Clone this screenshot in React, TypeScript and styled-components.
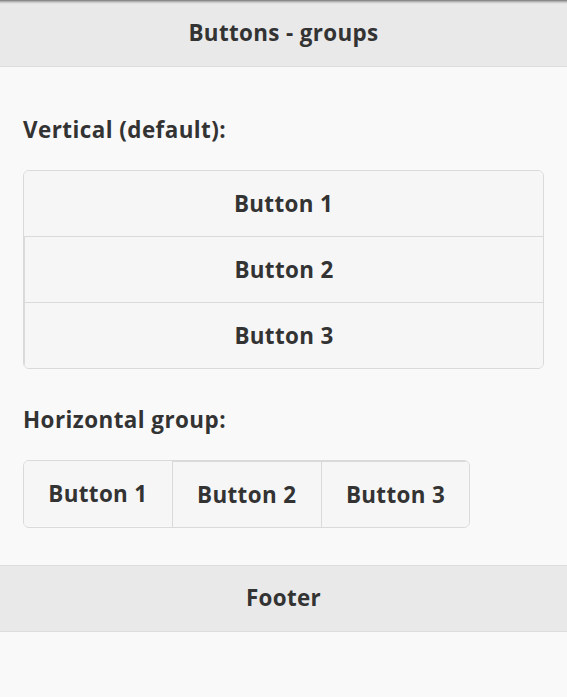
import styled, { createGlobalStyle } from 'styled-components';

const GlobalStyle = createGlobalStyle`
  html, body {
    margin: 0;
    padding: 0;
    background: #f9f9f9;
  }
  body {
    font-family: "Open Sans", "DejaVu Sans", sans-serif;
    font-size: 22.4px;
    color: #333;
  }
`;

const Page = styled.div`
  min-height: 697px;
  background: #f9f9f9;
`;

// Toolbar used for both header and footer
const Bar = styled.div<{ top?: boolean }>`
  background: ${p =>
    p.top
      ? 'linear-gradient(to bottom, #7a7a7a 0, #9a9a9a 1px, #c4c4c4 2px, #e9e9e9 4px, #e9e9e9 100%)'
      : '#e9e9e9'};
  border-top: ${p => (p.top ? 'none' : '1px solid #ddd')};
  border-bottom: 1px solid #ddd;
  height: ${p => (p.top ? '66px' : '65px')};
  display: flex;
  align-items: center;
  justify-content: center;
`;

const BarTitle = styled.h1`
  margin: 0;
  font-size: 22.4px;
  font-weight: 700;
  letter-spacing: 0.35px;
  color: #333;
  line-height: 1;
`;

const Content = styled.div`
  padding: 48px 23px 37px;
  display: flex;
  flex-direction: column;
`;

const Label = styled.div`
  font-size: 22.4px;
  font-weight: 700;
  letter-spacing: 0.45px;
  line-height: 30px;
  margin-bottom: 25px;
`;

const VerticalGroup = styled.div`
  display: flex;
  flex-direction: column;
  border: 1px solid #dadada;
  border-radius: 6px;
  overflow: hidden;
  margin-bottom: 36px;
`;

const HorizontalGroup = styled.div`
  display: inline-flex;
  align-self: flex-start;
  border: 1px solid #dadada;
  border-radius: 6px;
  overflow: hidden;
`;

const GroupButton = styled.button<{ horizontal?: boolean }>`
  box-sizing: content-box;
  font-family: inherit;
  font-size: 22.4px;
  font-weight: 700;
  letter-spacing: 0.35px;
  color: #333;
  background: #f6f6f6;
  border: none;
  margin: 0;
  cursor: pointer;
  height: 65px;
  padding: 0 ${p => (p.horizontal ? '24.3px' : '22px')};
  display: flex;
  align-items: center;
  justify-content: center;
  & + & {
    ${p => (p.horizontal ? 'border-left: 1px solid #dadada;' : 'border-top: 1px solid #dadada;')}
  }
`;

const buttons = ['Button 1', 'Button 2', 'Button 3'];

export default function App() {
  return (
    <Page>
      <GlobalStyle />
      <Bar top>
        <BarTitle>Buttons - groups</BarTitle>
      </Bar>
      <Content>
        <Label>Vertical (default):</Label>
        <VerticalGroup>
          {buttons.map(b => (
            <GroupButton key={b}>{b}</GroupButton>
          ))}
        </VerticalGroup>
        <Label>Horizontal group:</Label>
        <HorizontalGroup>
          {buttons.map(b => (
            <GroupButton key={b} horizontal>
              {b}
            </GroupButton>
          ))}
        </HorizontalGroup>
      </Content>
      <Bar>
        <BarTitle>Footer</BarTitle>
      </Bar>
    </Page>
  );
}
